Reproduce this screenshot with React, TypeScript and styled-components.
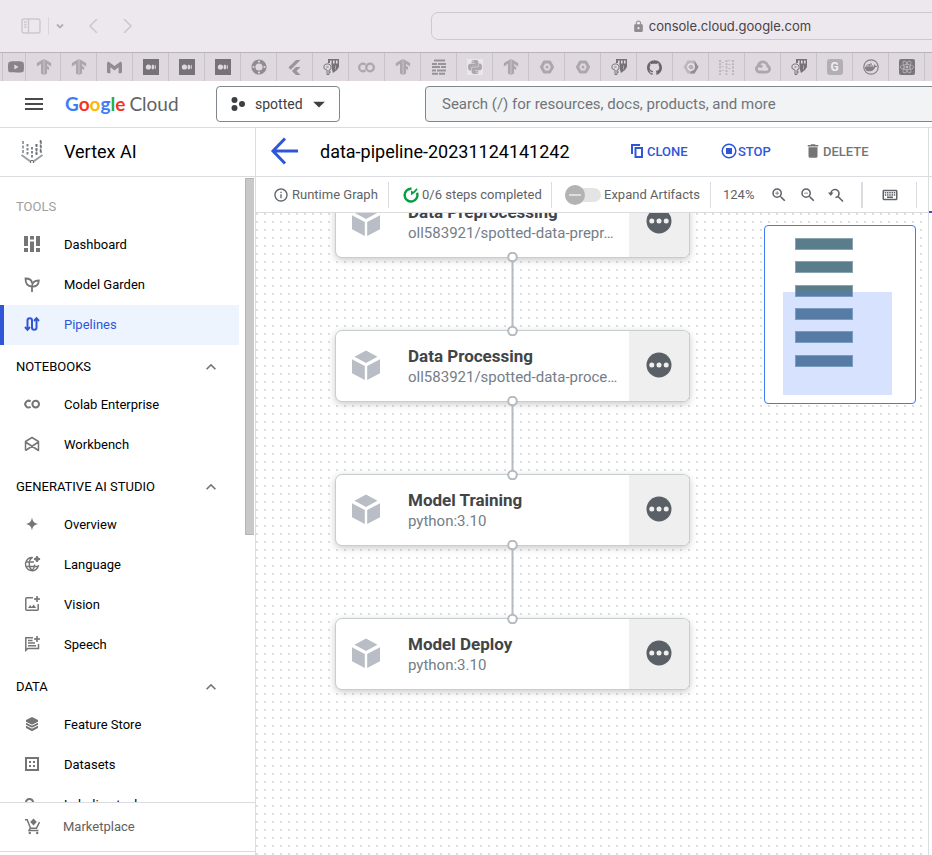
import React from "react";
import styled, { createGlobalStyle, css } from "styled-components";
import {
  SiDocker,
  SiFlutter,
  SiGithub,
  SiGmail,
  SiGooglecloud,
  SiGooglecolab,
  SiPython,
  SiReact,
  SiTensorflow,
  SiYoutube,
} from "react-icons/si";
import {
  MdArrowDropDown,
  MdDelete,
  MdInfoOutline,
  MdKeyboardArrowUp,
  MdLock,
  MdOutlineKeyboard,
  MdZoomIn,
  MdZoomOut,
} from "react-icons/md";

const line = "#dadce0";
const blue = "#3056d8";
const grey = "#757575";

const GlobalStyle = createGlobalStyle`
  *, *::before, *::after { box-sizing: border-box; }
  body { margin: 0; background: #fff; color: #000; font-family: Roboto, "Liberation Sans", sans-serif; font-size: 13px; }
  button, input { font: inherit; }
  button { border: 0; padding: 0; background: none; color: inherit; cursor: pointer; }
  svg { display: block; flex: none; }
  h1, h2, p, ul { margin: 0; padding: 0; font-weight: 400; }
  ul { list-style: none; }
`;

const Page = styled.div`
  display: flex;
  flex-direction: column;
  height: 100vh;
  overflow: hidden;
`;

/* ---------- Browser chrome ---------- */

const BrowserBar = styled.div`
  display: flex;
  align-items: center;
  flex: none;
  height: 52px;
  padding-left: 21px;
  background: #ede8ed;
  color: #cdc7cd;
`;

const BrowserButton = styled.button<{ $gap?: number }>`
  display: flex;
  margin-left: ${(p) => p.$gap ?? 0}px;
`;

const BarDivider = styled.span`
  width: 1px;
  height: 18px;
  margin-left: 7px;
  background: #dbd5db;
`;

const AddressBar = styled.div`
  display: flex;
  align-items: center;
  justify-content: center;
  gap: 4px;
  flex: 1 0 auto;
  height: 28px;
  margin-left: 296px;
  margin-right: -80px;
  border: 1px solid #cfc9cf;
  border-radius: 7px;
  color: #47434a;
  font-family: Inter, "Liberation Sans", sans-serif;
  font-size: 13px;
`;

const TabStrip = styled.div`
  display: flex;
  flex: none;
  height: 29px;
  overflow: hidden;
  border-top: 1px solid #b9b3b9;
  background: #dfd9df;
`;

const Tab = styled.button<{ $width?: number; $tone?: string; $pad?: number }>`
  display: flex;
  align-items: center;
  justify-content: center;
  flex: none;
  width: ${(p) => p.$width ?? 36}px;
  padding-left: ${(p) => p.$pad ?? 0}px;
  border-right: 1px solid #c8c2c9;
  color: ${(p) => p.$tone ?? "#aca7ad"};
`;

/* ---------- Console header ---------- */

const Header = styled.header`
  display: flex;
  align-items: center;
  flex: none;
  height: 47px;
  padding-left: 25px;
  border-bottom: 1px solid ${line};
  overflow: hidden;
`;

const IconButton = styled.button`
  display: flex;
  align-items: center;
  justify-content: center;
`;

const Brand = styled.a`
  display: flex;
  align-items: baseline;
  gap: 4px;
  width: 117px;
  margin-left: 22px;
  color: #5f6368;
  font-family: Lato, "Liberation Sans", sans-serif;
  font-size: 19px;
  line-height: 24px;
  text-decoration: none;
  white-space: nowrap;
`;

const Letter = styled.span<{ $color: string }>`
  color: ${(p) => p.$color};
  font-weight: 700;
`;

const ProjectPicker = styled.button`
  display: flex;
  align-items: center;
  flex: none;
  width: 124px;
  height: 36px;
  margin-left: 34px;
  padding: 0 6px 0 14px;
  border: 1px solid #80868b;
  border-radius: 4px;
  color: #3c4043;
  font-size: 14px;
`;

const PickerName = styled.span`
  flex: 1;
  margin-left: 10px;
  text-align: left;
`;

const Search = styled.input`
  flex: 1 0 auto;
  height: 36px;
  margin-left: 85px;
  margin-right: -10px;
  padding: 0 16px;
  border: 1px solid #80868b;
  border-radius: 4px;
  background: #f1f3f4;
  font-size: 15px;
  &::placeholder { color: #70757a; opacity: 1; }
`;

/* ---------- Body ---------- */

const Body = styled.div`
  display: flex;
  flex: 1;
  min-height: 0;
`;

const Sidebar = styled.nav`
  display: flex;
  flex-direction: column;
  flex: none;
  width: 256px;
  border-right: 1px solid ${line};
`;

const ProductTitle = styled.div`
  display: flex;
  align-items: center;
  gap: 20px;
  flex: none;
  height: 49px;
  padding: 0 0 2px 20px;
  border-bottom: 1px solid ${line};
  font-size: 18px;
`;

const ScrollRow = styled.div`
  display: flex;
  flex: 1;
  min-height: 0;
  overflow: hidden;
`;

const NavList = styled.ul`
  width: 239px;
  padding-top: 8px;
`;

const NavLabel = styled.li`
  display: flex;
  align-items: center;
  height: 40px;
  padding: 3px 16px 0;
  color: #9e9e9e;
`;

const SectionButton = styled.button`
  display: flex;
  align-items: center;
  justify-content: space-between;
  width: 100%;
  height: 40px;
  padding: 3px 18px 0 16px;
  svg { color: ${grey}; }
`;

const NavLink = styled.a<{ $active?: boolean }>`
  display: flex;
  align-items: center;
  gap: 20px;
  height: 40px;
  padding: 0 0 2px 20px;
  color: #000;
  text-decoration: none;
  svg { color: ${grey}; }
  ${(p) =>
    p.$active &&
    css`
      padding-left: 16px;
      border-left: 4px solid ${blue};
      background: #edf4fe;
      color: ${blue};
      svg { color: ${blue}; }
    `}
`;

const ScrollThumb = styled.div`
  width: 9px;
  height: 357px;
  margin: 1px 1px 0 auto;
  border: 1px solid #b5b5b5;
  border-right: 0;
  background: #c8c8c8;
`;

const MarketplaceLink = styled.a`
  display: flex;
  align-items: center;
  gap: 19px;
  flex: none;
  height: 50px;
  margin-bottom: 3px;
  padding: 0 0 2px 20px;
  border-top: 1px solid ${line};
  border-bottom: 1px solid ${line};
  color: #616161;
  text-decoration: none;
  svg { color: ${grey}; }
`;

const Main = styled.main`
  display: flex;
  flex-direction: column;
  flex: 1;
  min-width: 0;
`;

const TitleBar = styled.div`
  display: flex;
  align-items: center;
  flex: none;
  height: 49px;
  padding: 0 0 2px 14px;
  border-bottom: 1px solid ${line};
`;

const PageTitle = styled.h1`
  flex: none;
  width: 310px;
  margin-left: 21px;
  font-size: 18px;
  white-space: nowrap;
`;

const ActionButton = styled.button<{ $width: number; $muted?: boolean }>`
  display: flex;
  align-items: center;
  gap: 1px;
  flex: none;
  width: ${(p) => p.$width}px;
  color: ${(p) => (p.$muted ? grey : blue)};
  font-weight: 500;
`;

const Toolbar = styled.div`
  display: flex;
  align-items: center;
  flex: none;
  height: 36px;
  border-bottom: 1px solid ${line};
  color: #5f6368;
  font-weight: 450;
  white-space: nowrap;
`;

const ToolGroup = styled.div<{ $width: number; $pad: number; $gap?: number; $thick?: boolean }>`
  display: flex;
  align-items: center;
  gap: ${(p) => p.$gap ?? 3}px;
  flex: none;
  width: ${(p) => p.$width}px;
  height: 26px;
  padding-left: ${(p) => p.$pad}px;
  border-right: ${(p) => (p.$thick ? 2 : 1)}px solid ${line};
`;

const ZoomLevel = styled.span`
  width: 36px;
`;

const SwitchLabel = styled.label`
  display: flex;
  align-items: center;
  gap: 3px;
`;

const Switch = styled.input`
  appearance: none;
  display: flex;
  align-items: center;
  width: 36px;
  height: 14px;
  margin: 0;
  border-radius: 7px;
  background: #e4e4e4;
  &::before {
    content: "";
    flex: none;
    width: 20px;
    height: 20px;
    border-radius: 50%;
    background: linear-gradient(#dedede, #dedede) center / 12px 2px no-repeat #b3b3b3;
  }
`;

/* ---------- Graph ---------- */

const Canvas = styled.section`
  position: relative;
  flex: 1;
  min-height: 0;
  overflow: hidden;
  background: conic-gradient(at 2px 2px, transparent 75%, #dedfe0 0) 0 0 / 8px 8px;
`;

const Graph = styled.div`
  position: absolute;
  top: -27px;
  left: 79px;
  display: flex;
  flex-direction: column;
  align-items: center;
  width: 355px;
`;

const Node = styled.article`
  display: flex;
  width: 100%;
  height: 72px;
  border: 1px solid #c6cecf;
  border-radius: 7px;
  background: #fff;
  box-shadow: 0 2px 7px rgba(60, 64, 67, 0.28);
`;

const NodeIcon = styled.div`
  display: flex;
  align-items: center;
  padding: 0 0 2px 16px;
  width: 72px;
  color: #b9bec6;
`;

const NodeText = styled.div`
  flex: 1;
  min-width: 0;
  padding-top: 14px;
  white-space: nowrap;
`;

const NodeTitle = styled.h2`
  color: #414548;
  font-size: 17px;
  font-weight: 700;
  line-height: 22px;
`;

const NodeSubtitle = styled.p`
  color: #757d88;
  font-size: 15px;
  font-weight: 450;
  line-height: 20px;
`;

const NodeMenu = styled.button`
  display: flex;
  align-items: center;
  justify-content: center;
  width: 60px;
  padding-bottom: 2px;
  border-radius: 0 6px 6px 0;
  background: #efefef;
  color: #5b5f66;
`;

const Connector = styled.svg`
  z-index: 1;
  margin: -6px 0;
`;

const Minimap = styled.div`
  position: absolute;
  top: 12px;
  right: 12px;
  border: 1px solid #3f7af0;
  border-radius: 4px;
  background: #fff;
`;

const SidePanel = styled.aside`
  flex: none;
  width: 4px;
  border-left: 1px solid ${line};
`;

const PanelHead = styled.div`
  height: 49px;
  border-bottom: 1px solid ${line};
`;

const PanelTab = styled.div`
  height: 36px;
  border-bottom: 2px solid ${blue};
`;

/* ---------- Icons ---------- */

type IconProps = { size?: number; box?: number; children: React.ReactNode };

const Icon = ({ size = 24, box = 24, children }: IconProps) => (
  <svg width={size} height={size} viewBox={`0 0 ${box} ${box}`} fill="currentColor" aria-hidden="true">
    {children}
  </svg>
);

const Stroke = ({ size = 24, box = 24, width = 1.6, children }: IconProps & { width?: number }) => (
  <svg
    width={size}
    height={size}
    viewBox={`0 0 ${box} ${box}`}
    fill="none"
    stroke="currentColor"
    strokeWidth={width}
    aria-hidden="true"
  >
    {children}
  </svg>
);

const MediumTab = () => (
  <Icon size={16} box={16}>
    <path d="M0 0h16v16H0z" />
    <g fill="#dfd9df">
      <circle cx="5.4" cy="8" r="2.6" />
      <ellipse cx="9.8" cy="8" rx="1.3" ry="2.5" />
      <ellipse cx="12.2" cy="8" rx="0.6" ry="2.2" />
    </g>
  </Icon>
);

const KeyShieldTab = () => (
  <Icon size={16} box={16}>
    <path d="M5 0h11v8l-2 3-4 3-1-3V8L8 4H5z" />
    <path d="M7 1.5h1.6v3H7zM10 1.5h1.6v3H10zM13 1.5h1.6v3H13z" fill="#dfd9df" />
    <g fill="none" stroke="currentColor" strokeWidth="1">
      <path d="M1 6.5 3 5h3l2 2v3L6 11v4.500H4V11L1 9.500z" fill="#dfd9df" />
      <path d="M3.500 8h2M6 13h2" />
    </g>
    <path d="M12.500 6.500v4" stroke="#aaa5ab" />
  </Icon>
);

const GearTab = () => (
  <Stroke size={16} box={16}>
    <circle cx="8" cy="8" r="5.600" strokeWidth="4" />
    <g fill="#dfd9df" stroke="none">
      <circle cx="8" cy="2.500" r="1.100" />
      <circle cx="8" cy="13.500" r="1.100" />
      <circle cx="2.500" cy="8" r="1.100" />
      <circle cx="13.500" cy="8" r="1.100" />
    </g>
  </Stroke>
);

const BrickTab = () => (
  <Stroke size={16} box={16} width={2}>
    <path d="M3 1.500h11M1 5h5M7 5h8M1 8h8M10 8h5M1 11.500h4M6 11.500h9M1 14.800h6M8 14.800h6" />
  </Stroke>
);

const HexTab = () => (
  <Stroke size={14} box={14} width={3}>
    <path d="M4.300 2h5.400L12.500 7 9.700 12H4.300L1.500 7z" strokeLinejoin="round" />
    <circle cx="7" cy="7" r="1.500" fill="currentColor" stroke="none" />
  </Stroke>
);

const HexShadeTab = () => (
  <Icon size={16} box={16}>
    <path d="M4.500 1.500h7L15.500 8l-4 6.500h-7L.5 8z" fill="#bdb8be" />
    <path d="M11.500 1.500 15.500 8l-4 6.500h-5L12 8z" fill="#938e94" />
    <circle cx="8" cy="8" r="3.200" fill="#b7b2b8" stroke="#f0ecf0" strokeWidth="1.200" />
  </Icon>
);

const DotColumnsTab = () => (
  <Stroke size={17} box={17} width={2}>
    <path d="M2 1v15M8.500 1v15M15 1v15" strokeDasharray="2 1.300" />
    <path d="M4.500 3v12M11.500 1v12" strokeDasharray="1 3" />
  </Stroke>
);

const LetterTab = styled.span`
  width: 16px;
  height: 16px;
  border-radius: 3px;
  background: #b3aeb4;
  color: #f0ecf0;
  font-size: 12px;
  font-weight: 700;
  line-height: 17px;
  text-align: center;
`;

const PythonTile = styled.span`
  padding: 1px;
  background: #ebe6eb;
`;

const ReactTile = styled.span`
  padding: 1px;
  border-radius: 2px;
  background: #7b767c;
  color: #c5c0c6;
`;

const DockerTab = () => (
  <Stroke size={16} box={16} width={1.2}>
    <circle cx="8" cy="8" r="7.200" />
    <SiDocker x="2" y="2" size={12} stroke="none" />
  </Stroke>
);

const SidebarToggle = () => (
  <Stroke size={20} box={20} width={1.4}>
    <rect x="1" y="3" width="18" height="14" rx="2" />
    <path d="M7.500 3v14M3 6h2.500M3 8.500h2.500M3 11h2.500" />
  </Stroke>
);

const VertexLogo = () => (
  <Stroke size={24} box={24} width={2}>
    <path d="M3 2v12M21 2v12" strokeDasharray="3 1.500" stroke="#9aa0a6" />
    <path d="M7.500 5v11M12 8v11M16.500 5v11" strokeDasharray="2.500 1.500" stroke="#80868b" />
    <path d="M20.500 1v13M16.500 5v11" strokeDasharray="3 1.500" stroke="#6f757a" strokeWidth="1.500" />
    <path d="M1.500 16 12 23.500 22.500 16" stroke="#9aa0a6" />
    <circle cx="12" cy="23" r="1.600" stroke="#5f6368" strokeWidth="1" fill="#fff" />
  </Stroke>
);

const DashboardIcon = () => (
  <Icon>
    <path d="M4 4h4v10H4zM4 16h4v4H4zM10 4h4v3.500h-4zM10 9.500h4V20h-4zM16 4h4v10h-4zM16 16h4v4h-4z" />
  </Icon>
);

const GardenIcon = () => (
  <Stroke width={1.8}>
    <path d="M12 20V14M12 14.500C7.500 14.500 5.500 11.500 5.500 6.500c4.500 0 6.500 2 6.500 5" />
    <path d="M12 14.500c0-4 2.500-6 6.800-6 0 4.300-2.800 6.300-6.800 6z" />
  </Stroke>
);

const PipelineIcon = () => (
  <Stroke width={2}>
    <path d="M7.500 18V8.500a2.200 2.200 0 0 1 4.500 0v7a2.200 2.200 0 0 0 4.500 0V6.500" />
    <path d="m5 15 2.500 2.800L10 15M14 9l2.500-2.800L19 9" />
  </Stroke>
);

const ColabIcon = () => (
  <Stroke width={2}>
    <path d="M10.600 9.500a3.300 3.300 0 1 0 0 5.200" />
    <circle cx="15.700" cy="12.100" r="3.300" />
  </Stroke>
);

const WorkbenchIcon = () => (
  <Stroke width={1.5}>
    <path d="M5.500 18.500v-9L12 5.500l6.500 4v9L5.500 10M18.500 10l-13 8.500" strokeLinejoin="round" />
  </Stroke>
);

const SparkleIcon = () => (
  <Icon>
    <path d="M12 5.500c.8 4.200 2.300 5.700 6.500 6.500-4.200.8-5.700 2.300-6.500 6.500-.8-4.200-2.300-5.700-6.500-6.500 4.200-.8 5.700-2.300 6.500-6.500z" />
  </Icon>
);

const miniSparkle = "M17 4c.3 2.200.8 2.700 3 3-2.200.3-2.700.8-3 3-.3-2.200-.8-2.700-3-3 2.200-.3 2.700-.8 3-3z";

const LanguageIcon = () => (
  <Stroke width={1.4}>
    <path d="M13 5.600a6.600 6.600 0 1 0 5.600 7.400M5.400 10H14M5.400 14.500h13M12 5.500c-3.700 3-3.700 10 0 13M12 18.500c1.500-1.300 2.500-3 2.700-6" />
    <path d={miniSparkle} fill="currentColor" />
  </Stroke>
);

const VisionIcon = () => (
  <Stroke width={1.5}>
    <path d="M13 5.800H6.800a1 1 0 0 0-1 1v10.400a1 1 0 0 0 1 1h10.400a1 1 0 0 0 1-1V12" />
    <path d="m8 16 2.200-3 1.500 2 2-2.500 2.500 3.500z" fill="currentColor" stroke="none" />
    <path d={miniSparkle} fill="currentColor" strokeWidth="1" />
  </Stroke>
);

const SpeechIcon = () => (
  <Stroke width={1.5}>
    <path d="M13 5.800H5.800v12.500l2-1.800h10.700V12M8 8.500h4.500M8 11h7M8 13.700h8" />
    <path d={miniSparkle} fill="currentColor" strokeWidth="1" />
  </Stroke>
);

const FeatureIcon = () => (
  <Icon>
    <path d="m12 5 6 3v8l-6 3.200L6 16V8z" />
    <path d="m5.500 10 6.500 3.200 6.500-3.200M5.500 13l6.500 3.200 6.500-3.200" fill="none" stroke="#fff" strokeWidth="1" />
  </Icon>
);

const DatasetIcon = () => (
  <Icon>
    <path d="M5 5h14v14H5zm2 2v10h10V7z" fillRule="evenodd" />
    <path d="M9 9h2v2H9zM13 9h2v2h-2zM9 13h2v2H9zM13 13h2v2h-2z" />
  </Icon>
);

const LabelIcon = () => (
  <Stroke width={2}>
    <path d="M6 11a3.500 3.500 0 0 1 7-1l5 4-5 5-6-5z" />
  </Stroke>
);

const CartIcon = () => (
  <Stroke width={1.5}>
    <path d="M5 5.800h2.200l3.300 8.400h6l3-6M10.300 14.200 9 16.600h9.500" />
    <path d="M13.500 4.500 16.800 8l-3.300 3.500L10.200 8z" fill="currentColor" stroke="none" />
    <circle cx="9.800" cy="19" r="1.200" fill="currentColor" stroke="none" />
    <circle cx="17.200" cy="19" r="1.200" fill="currentColor" stroke="none" />
  </Stroke>
);

const BackIcon = () => (
  <Stroke size={28} box={28} width={3}>
    <path d="M28 14H3.500M15 1.500 3 14l12 12.500" />
  </Stroke>
);

const CloneIcon = () => (
  <Stroke size={16} box={16} width={2}>
    <path d="M2 11V2h8M5.500 5h6.500v9H5.500z" />
  </Stroke>
);

const StopIcon = () => (
  <Stroke size={16} box={16} width={1.5}>
    <circle cx="8" cy="8" r="6.800" />
    <path d="M5 5h6v6H5z" fill="currentColor" stroke="none" />
  </Stroke>
);

const ProgressIcon = () => (
  <Stroke size={16} box={16} width={2.4}>
    <path d="M8.500 1.700A6.400 6.400 0 1 0 14 5.800" stroke="#0b9d42" />
    <path d="M8 8.200V3.500l2.200 1.200L13.500 1.200l1.200 1.200-3.200 3.500z" fill="#0b9d42" stroke="none" />
  </Stroke>
);

const ResetZoomIcon = () => (
  <Stroke size={16} box={16} width={1.6}>
    <path d="M3 6.500a4 4 0 1 1 4.500 4M10 9.500l5 5" />
    <path d="M0 5.500h5.500L2.800 9z" fill="currentColor" stroke="none" />
  </Stroke>
);

const CubeIcon = () => (
  <Icon size={30} box={30}>
    <path d="M14 .5 25.500 6.800 14 13 2.500 6.800z" />
    <path d="M0 9.300 12.800 16v14L0 23.300zM28 9.300 15.200 16v14L28 23.300z" />
  </Icon>
);

const MoreIcon = () => (
  <Icon size={26} box={26}>
    <circle cx="13" cy="13" r="12.500" />
    <g fill="#efefef">
      <circle cx="5.800" cy="13" r="2.500" />
      <circle cx="13" cy="13" r="2.500" />
      <circle cx="20.200" cy="13" r="2.500" />
    </g>
  </Icon>
);

const Link = () => (
  <Connector width="13" height="84" viewBox="0 0 13 84" fill="#fff" stroke="#b5babf" strokeWidth="2">
    <path d="M6.500 5v74" />
    <circle cx="6.500" cy="5" r="4.300" />
    <circle cx="6.500" cy="79" r="4.300" />
  </Connector>
);

/* ---------- Data ---------- */

const tabs: { name: string; icon: React.ReactNode; tone?: string; width?: number; pad?: number }[] = [
  { name: "YouTube", icon: <SiYoutube size={16} />, tone: "#89848a", width: 23, pad: 4 },
  { name: "TensorFlow", icon: <SiTensorflow size={16} />, width: 35, pad: 2 },
  { name: "TensorFlow", icon: <SiTensorflow size={16} /> },
  { name: "Gmail", icon: <SiGmail size={15} />, tone: "#918c92" },
  { name: "Medium", icon: <MediumTab />, tone: "#777278" },
  { name: "Medium", icon: <MediumTab />, tone: "#777278" },
  { name: "Medium", icon: <MediumTab />, tone: "#777278" },
  { name: "Settings", icon: <GearTab />, tone: "#918c92" },
  { name: "Flutter", icon: <SiFlutter size={15} />, tone: "#9a959b" },
  { name: "Security", icon: <KeyShieldTab />, tone: "#77727a" },
  { name: "Colab", icon: <SiGooglecolab size={17} />, tone: "#aca7ad" },
  { name: "TensorFlow", icon: <SiTensorflow size={16} /> },
  { name: "Bricks", icon: <BrickTab />, tone: "#989399" },
  { name: "Python", icon: <PythonTile><SiPython size={14} /></PythonTile> },
  { name: "TensorFlow", icon: <SiTensorflow size={16} /> },
  { name: "Cloud", icon: <HexTab /> },
  { name: "Cloud", icon: <HexTab /> },
  { name: "Security", icon: <KeyShieldTab />, tone: "#77727a" },
  { name: "GitHub", icon: <SiGithub size={15} />, tone: "#6c676d" },
  { name: "Cloud", icon: <HexShadeTab /> },
  { name: "Columns", icon: <DotColumnsTab />, tone: "#bcb7bd" },
  { name: "Google Cloud", icon: <SiGooglecloud size={16} /> },
  { name: "Security", icon: <KeyShieldTab />, tone: "#77727a" },
  { name: "Google", icon: <LetterTab>G</LetterTab> },
  { name: "Docker", icon: <DockerTab />, tone: "#858086" },
  { name: "React", icon: <ReactTile><SiReact size={14} /></ReactTile> },
];

const sections = [
  {
    title: "NOTEBOOKS",
    items: [
      { label: "Colab Enterprise", icon: <ColabIcon /> },
      { label: "Workbench", icon: <WorkbenchIcon /> },
    ],
  },
  {
    title: "GENERATIVE AI STUDIO",
    items: [
      { label: "Overview", icon: <SparkleIcon /> },
      { label: "Language", icon: <LanguageIcon /> },
      { label: "Vision", icon: <VisionIcon /> },
      { label: "Speech", icon: <SpeechIcon /> },
    ],
  },
  {
    title: "DATA",
    items: [
      { label: "Feature Store", icon: <FeatureIcon /> },
      { label: "Datasets", icon: <DatasetIcon /> },
      { label: "Labeling tasks", icon: <LabelIcon /> },
    ],
  },
];

const nodes = [
  { title: "Data Preprocessing", subtitle: "oll583921/spotted-data-prepr…" },
  { title: "Data Processing", subtitle: "oll583921/spotted-data-proce…" },
  { title: "Model Training", subtitle: "python:3.10" },
  { title: "Model Deploy", subtitle: "python:3.10" },
];

const brandLetters: [string, string][] = [
  ["G", "#3d7ef8"],
  ["o", "#f5331e"],
  ["o", "#fcb900"],
  ["g", "#3d7ef8"],
  ["l", "#1fab4b"],
  ["e", "#f5331e"],
];

const miniBars = [13, 36, 60, 83, 106, 130];

export default function App() {
  return (
    <Page>
      <GlobalStyle />
      <BrowserBar>
        <BrowserButton aria-label="Show sidebar"><SidebarToggle /></BrowserButton>
        <BarDivider />
        <BrowserButton aria-label="Tab groups" $gap={6}>
          <Stroke size={10} box={10} width={1.8}><path d="m2 3.500 3 3 3-3" stroke="#b4aeb4" /></Stroke>
        </BrowserButton>
        <BrowserButton aria-label="Back" $gap={21}>
          <Stroke size={14} box={14} width={1.5}><path d="M11 0 4 7l7 7" /></Stroke>
        </BrowserButton>
        <BrowserButton aria-label="Forward" $gap={21}>
          <Stroke size={14} box={14} width={1.5}><path d="m3 0 7 7-7 7" /></Stroke>
        </BrowserButton>
        <AddressBar>
          <MdLock size={13} color="#918b92" />
          console.cloud.google.com
        </AddressBar>
      </BrowserBar>
      <TabStrip>
        <Tab $width={3} aria-label="Earlier tab" />
        {tabs.map((t, i) => (
          <Tab key={i} aria-label={t.name} $tone={t.tone} $width={t.width} $pad={t.pad}>{t.icon}</Tab>
        ))}
      </TabStrip>

      <Header>
        <IconButton aria-label="Main menu">
          <Stroke size={18} box={18} width={2}><path d="M0 4h18M0 9h18M0 14h18" stroke="#4a4a4a" /></Stroke>
        </IconButton>
        <Brand href="#home">
          <span>
            {brandLetters.map(([ch, color], i) => (
              <Letter key={i} $color={color}>{ch}</Letter>
            ))}
          </span>
          <span>Cloud</span>
        </Brand>
        <ProjectPicker>
          <Icon size={14} box={14}>
            <circle cx="3.500" cy="3" r="3" />
            <circle cx="11" cy="7" r="3" />
            <circle cx="3.500" cy="11" r="3" />
          </Icon>
          <PickerName>spotted</PickerName>
          <MdArrowDropDown size={28} />
        </ProjectPicker>
        <Search aria-label="Search" placeholder="Search (/) for resources, docs, products, and more" />
      </Header>

      <Body>
        <Sidebar>
          <ProductTitle><VertexLogo />Vertex AI</ProductTitle>
          <ScrollRow>
            <NavList>
              <NavLabel>TOOLS</NavLabel>
              <li><NavLink href="#dashboard"><DashboardIcon />Dashboard</NavLink></li>
              <li><NavLink href="#garden"><GardenIcon />Model Garden</NavLink></li>
              <li><NavLink href="#pipelines" $active><PipelineIcon />Pipelines</NavLink></li>
              {sections.map((s) => (
                <li key={s.title}>
                  <SectionButton>{s.title}<MdKeyboardArrowUp size={20} /></SectionButton>
                  <ul>
                    {s.items.map((item) => (
                      <li key={item.label}><NavLink href="#item">{item.icon}{item.label}</NavLink></li>
                    ))}
                  </ul>
                </li>
              ))}
            </NavList>
            <ScrollThumb />
          </ScrollRow>
          <MarketplaceLink href="#marketplace"><CartIcon />Marketplace</MarketplaceLink>
        </Sidebar>

        <Main>
          <TitleBar>
            <ActionButton $width={29} aria-label="Back to pipelines"><BackIcon /></ActionButton>
            <PageTitle>data-pipeline-20231124141242</PageTitle>
            <ActionButton $width={91}><CloneIcon />CLONE</ActionButton>
            <ActionButton $width={83}><StopIcon />STOP</ActionButton>
            <ActionButton $width={70} $muted><MdDelete size={18} />DELETE</ActionButton>
          </TitleBar>
          <Toolbar>
            <ToolGroup $width={133} $pad={17}><MdInfoOutline size={16} />Runtime Graph</ToolGroup>
            <ToolGroup $width={163} $pad={14}><ProgressIcon />0/6 steps completed</ToolGroup>
            <ToolGroup $width={159} $pad={13}>
              <SwitchLabel><Switch type="checkbox" />Expand Artifacts</SwitchLabel>
            </ToolGroup>
            <ToolGroup $width={152} $pad={12} $gap={11} $thick>
              <ZoomLevel>124%</ZoomLevel>
              <IconButton aria-label="Zoom in"><MdZoomIn size={18} /></IconButton>
              <IconButton aria-label="Zoom out"><MdZoomOut size={18} /></IconButton>
              <IconButton aria-label="Reset zoom"><ResetZoomIcon /></IconButton>
            </ToolGroup>
            <ToolGroup $width={54} $pad={18}>
              <IconButton aria-label="Keyboard shortcuts"><MdOutlineKeyboard size={18} /></IconButton>
            </ToolGroup>
          </Toolbar>
          <Canvas>
            <Graph>
              {nodes.map((n, i) => (
                <React.Fragment key={n.title}>
                  {i > 0 && <Link />}
                  <Node>
                    <NodeIcon><CubeIcon /></NodeIcon>
                    <NodeText>
                      <NodeTitle>{n.title}</NodeTitle>
                      <NodeSubtitle>{n.subtitle}</NodeSubtitle>
                    </NodeText>
                    <NodeMenu aria-label={`More options for ${n.title}`}><MoreIcon /></NodeMenu>
                  </Node>
                </React.Fragment>
              ))}
            </Graph>
            <Minimap>
              <svg width="150" height="177" viewBox="0 0 150 177">
                {miniBars.map((y) => (
                  <rect key={y} x="30.500" y={y - 0.5} width="57" height="11" fill="#5a7d8c" stroke="#8ba4af" />
                ))}
                <rect x="18" y="66" width="109" height="103" fill="#4a7bff" fillOpacity="0.22" />
              </svg>
            </Minimap>
          </Canvas>
        </Main>
        <SidePanel><PanelHead /><PanelTab /></SidePanel>
      </Body>
    </Page>
  );
}
